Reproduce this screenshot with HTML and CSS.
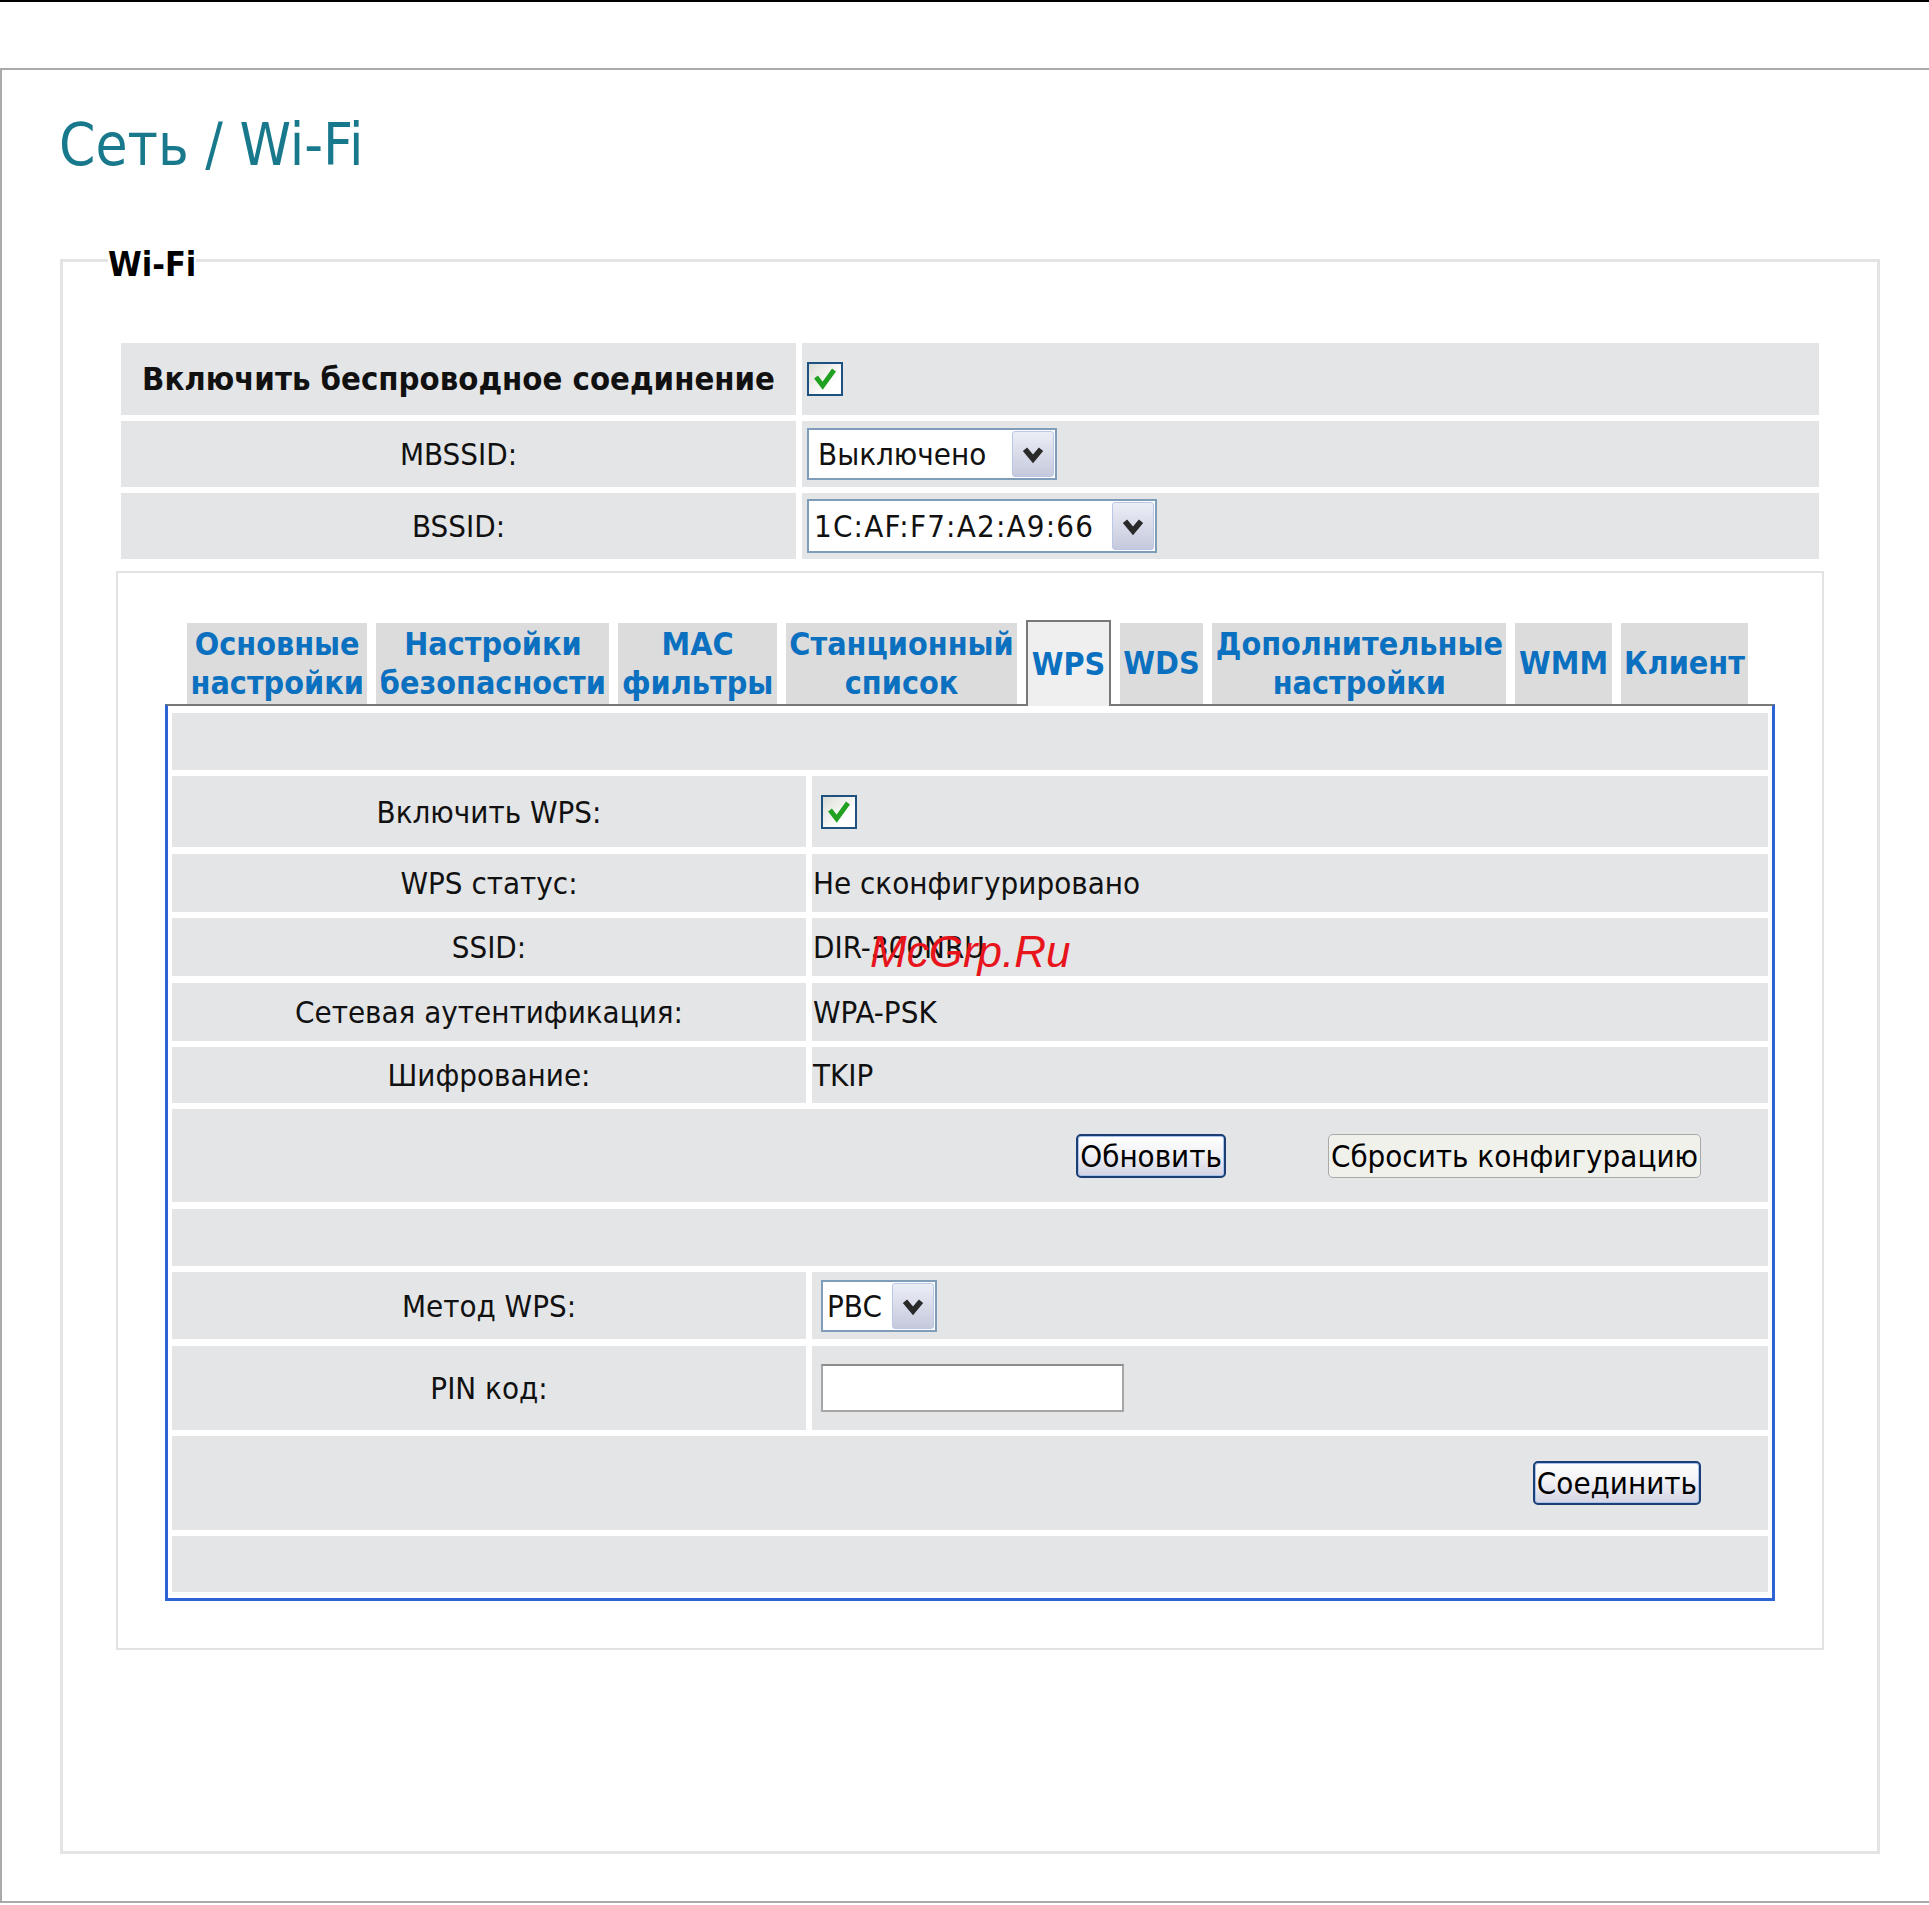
FILE: index.html
```html
<!DOCTYPE html>
<html lang="ru">
<head>
    <meta charset="UTF-8">
    <meta name="viewport" content="width=device-width, initial-scale=1.0">
    <title>Сеть / Wi-Fi</title>
    <link rel="stylesheet" href="styles.css">
</head>
<body>
    <div class="topline"></div>
    <div class="frame">
        <h1 class="title">Сеть / Wi-Fi</h1>

        <fieldset class="wifi">
            <legend>Wi-Fi</legend>

            <div class="main-grid">
                <div class="cell label bold">Включить беспроводное соединение</div>
                <div class="cell value">
                    <span class="check">
                        <svg viewBox="0 0 13 13" width="32" height="30"><polyline points="2.6,5.6 5.5,9.4 10.4,2.6" fill="none" stroke="#21a121" stroke-width="2.1"/></svg>
                    </span>
                </div>
                <div class="cell label">MBSSID:</div>
                <div class="cell value">
                    <div class="select sel-mbssid">
                        <span class="sel-text">Выключено</span>
                        <span class="sel-btn"><svg viewBox="0 0 12 12" width="26" height="26"><polyline points="2.3,3.8 6,8.2 9.7,3.8" fill="none" stroke="#2a2a2a" stroke-width="2.6"/></svg></span>
                    </div>
                </div>
                <div class="cell label">BSSID:</div>
                <div class="cell value">
                    <div class="select sel-bssid">
                        <span class="sel-text">1C:AF:F7:A2:A9:66</span>
                        <span class="sel-btn"><svg viewBox="0 0 12 12" width="26" height="26"><polyline points="2.3,3.8 6,8.2 9.7,3.8" fill="none" stroke="#2a2a2a" stroke-width="2.6"/></svg></span>
                    </div>
                </div>
            </div>

            <div class="tabbox">
                <div class="tabs">
                    <div class="tab">Основные<br>настройки</div>
                    <div class="tab">Настройки<br>безопасности</div>
                    <div class="tab">MAC<br>фильтры</div>
                    <div class="tab">Станционный<br>список</div>
                    <div class="tab active">WPS</div>
                    <div class="tab">WDS</div>
                    <div class="tab">Дополнительные<br>настройки</div>
                    <div class="tab">WMM</div>
                    <div class="tab">Клиент</div>
                </div>

                <div class="panel">
                    <div class="panel-grid">
                        <div class="cell wide"></div>

                        <div class="cell label">Включить WPS:</div>
                        <div class="cell value">
                            <span class="check pad">
                                <svg viewBox="0 0 13 13" width="32" height="30"><polyline points="2.6,5.6 5.5,9.4 10.4,2.6" fill="none" stroke="#21a121" stroke-width="2.1"/></svg>
                            </span>
                        </div>

                        <div class="cell label">WPS статус:</div>
                        <div class="cell value">Не сконфигурировано</div>

                        <div class="cell label">SSID:</div>
                        <div class="cell value ssid">DIR-300NRU<span class="watermark">McGrp.Ru</span></div>

                        <div class="cell label">Сетевая аутентификация:</div>
                        <div class="cell value">WPA-PSK</div>

                        <div class="cell label">Шифрование:</div>
                        <div class="cell value">TKIP</div>

                        <div class="cell wide actions">
                            <button class="btn focus" type="button">Обновить</button>
                            <button class="btn" type="button">Сбросить конфигурацию</button>
                        </div>

                        <div class="cell wide"></div>

                        <div class="cell label">Метод WPS:</div>
                        <div class="cell value">
                            <div class="select sel-pbc pad">
                                <span class="sel-text">PBC</span>
                                <span class="sel-btn"><svg viewBox="0 0 12 12" width="26" height="26"><polyline points="2.3,3.8 6,8.2 9.7,3.8" fill="none" stroke="#2a2a2a" stroke-width="2.6"/></svg></span>
                            </div>
                        </div>

                        <div class="cell label">PIN код:</div>
                        <div class="cell value">
                            <input class="pin pad" type="text">
                        </div>

                        <div class="cell wide actions">
                            <button class="btn focus" type="button">Соединить</button>
                        </div>

                        <div class="cell wide"></div>
                    </div>
                </div>
            </div>
        </fieldset>
    </div>
</body>
</html>
```

FILE: styles.css
```css
body {
    margin: 0;
    font-family: "DejaVu Sans Condensed", "DejaVu Sans", sans-serif;
    font-stretch: condensed;
    font-size: 31px;
    color: #111;
    background: #fff;
}
.topline {
    height: 2px;
    background: #000;
}
.frame {
    margin-top: 66px;
    border-top: 2px solid #aaa;
    border-left: 2px solid #aaa;
    border-bottom: 2px solid #aaa;
    overflow: hidden;
}
.title {
    margin: 40px 0 0 57px;
    font-size: 58px;
    font-weight: normal;
    line-height: 70px;
    color: #19798c;
}
.wifi {
    margin: 56px 49px 47px 58px;
    padding: 59px 53px 201px;
    border: 3px solid #e4e4e4;
    min-width: 0;
}
.wifi legend {
    margin-left: -8px;
    padding: 8px 0 0;
    font-size: 34px;
    font-weight: bold;
    line-height: 40px;
    color: #000;
}
.main-grid {
    margin: 0 5px;
    display: grid;
    grid-template-columns: 675px 1fr;
    grid-template-rows: 72px 66px 66px;
    gap: 6px;
}
.cell {
    background: #e4e5e7;
    display: flex;
    align-items: center;
}
.label {
    justify-content: center;
    text-align: center;
}
.bold {
    font-weight: bold;
    font-size: 32.6px;
}
.value {
    padding-left: 5px;
}
.check {
    width: 32px;
    height: 30px;
    border: 2px solid #1c5180;
    background: linear-gradient(135deg, #dcdcd6, #fff 70%);
    display: flex;
}
.select {
    display: flex;
    align-items: stretch;
    border: 2px solid #7f9db9;
    background: #fff;
    box-sizing: border-box;
}
.sel-mbssid { width: 250px; height: 52px; }
.sel-bssid { width: 350px; height: 54px; }
.sel-pbc { width: 116px; height: 52px; }
.sel-text {
    flex: 1;
    display: flex;
    align-items: center;
    padding-left: 9px;
    white-space: nowrap;
    overflow: hidden;
}
.sel-bssid .sel-text {
    padding-left: 5px;
    letter-spacing: 1.2px;
}
.sel-pbc .sel-text {
    padding-left: 4px;
}
.sel-btn {
    width: 40px;
    margin: 1px;
    border: 1px solid #bcc7e6;
    border-radius: 3px;
    background: linear-gradient(#eceef6, #c5c9dc);
    display: flex;
    align-items: center;
    justify-content: center;
}
.tabbox {
    margin-top: 12px;
    border: 2px solid #e2e2e2;
    padding: 47px;
}
.tabs {
    display: flex;
    align-items: flex-end;
    gap: 9px;
    padding-left: 22px;
    height: 84px;
}
.tab {
    height: 81px;
    padding: 0 3.5px;
    background: #dcdcdc;
    color: #0a70bf;
    font-size: 32px;
    font-weight: bold;
    line-height: 39px;
    text-align: center;
    display: flex;
    align-items: center;
    justify-content: center;
    white-space: nowrap;
}
.tab.active {
    height: 84px;
    margin-bottom: -2px;
    border: 2px solid #787878;
    border-bottom: none;
    background: #efefef;
    position: relative;
    z-index: 1;
}
.panel {
    border-top: 2px solid #787878;
    border-left: 3px solid #2d63d4;
    border-right: 3px solid #2d63d4;
    border-bottom: 3px solid #2d63d4;
    padding: 7px 4px 6px;
    background: #fff;
}
.panel-grid {
    display: grid;
    grid-template-columns: 634px 1fr;
    grid-template-rows: 57px 71px 58px 58px 58px 56px 93px 57px 67px 84px 94px 56px;
    column-gap: 6px;
    row-gap: 6.4px;
}
.panel-grid .value {
    padding-left: 1px;
}
.wide {
    grid-column: 1 / 3;
}
.pad {
    margin-left: 8px;
}
.ssid {
    position: relative;
}
.watermark {
    position: absolute;
    left: 58px;
    top: 12px;
    font-family: "Liberation Sans", Arial, sans-serif;
    font-style: italic;
    font-size: 44px;
    line-height: 44px;
    color: #e8141c;
}
.actions {
    justify-content: flex-end;
    gap: 102px;
    padding-right: 67px;
}
.btn {
    font-family: inherit;
    font-stretch: condensed;
    font-size: 31px;
    color: #000;
    height: 44px;
    padding: 0 2px;
    border: 1px solid #a9a9a9;
    border-radius: 5px;
    background: #f1f1ec;
}
.btn.focus {
    border: 2px solid #1b3e74;
    background: linear-gradient(#ffffff, #f2f2f6 45%, #d3d3e4);
    box-shadow: inset 0 0 0 1px #a9c2ec;
}
.pin {
    width: 303px;
    height: 48px;
    box-sizing: border-box;
    border: 2px solid #a6a6a6;
    border-top-color: #8c8c8c;
    background: #fff;
}
```
